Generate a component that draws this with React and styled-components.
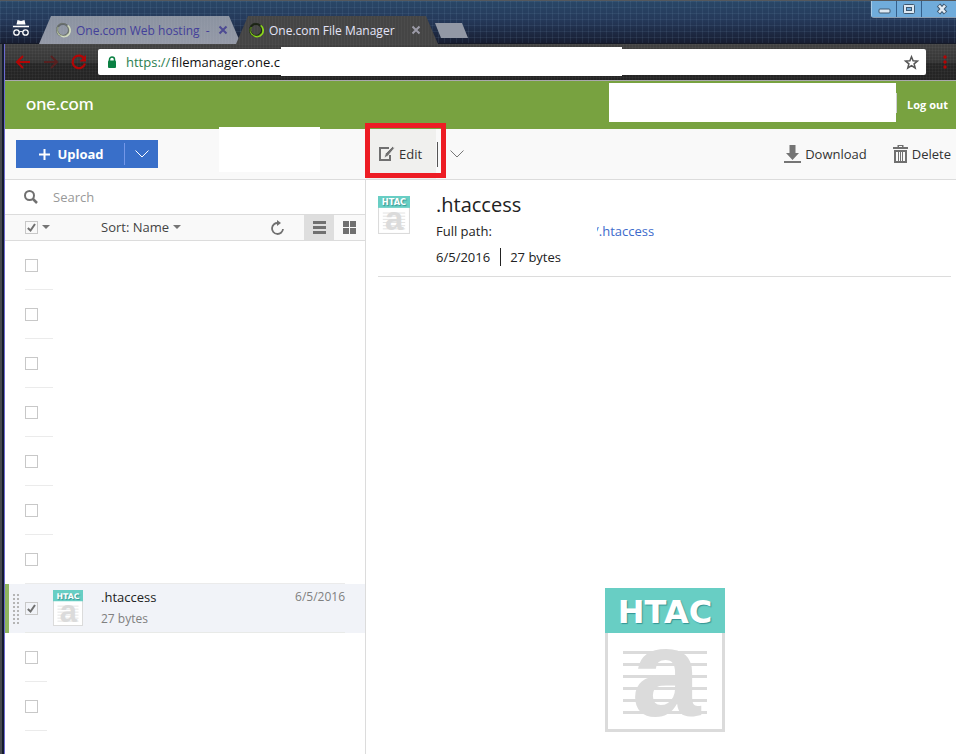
import React from 'react';
import styled, { createGlobalStyle } from 'styled-components';

const GlobalStyle = createGlobalStyle`
  * { box-sizing: border-box; }
  body { margin: 0; background: #fff; color: #222; font-family: "Open Sans", "Noto Sans", sans-serif; font-size: 13px; }
  button { margin: 0; padding: 0; border: 0; background: none; color: inherit; font: inherit; cursor: pointer; }
  input { margin: 0; font: inherit; }
  svg { display: block; flex: none; overflow: visible; }
`;

/* ---------- window and browser chrome ---------- */

const Window = styled.div`
  display: flex;
  flex-direction: column;
  min-height: 100vh;
  overflow: hidden;
  background: linear-gradient(90deg, #474a4f 0 2px, #141c2e 2px 4px, #6c69cf 4px 5px, #fff 5px);
`;

const TitleBar = styled.header`
  display: flex;
  align-items: flex-start;
  height: 44px;
  padding-left: 2px;
  border-top: 1px solid #55585c;
  background:
    repeating-linear-gradient(90deg, rgba(140, 175, 205, 0.1) 0 1px, transparent 1px 6px),
    repeating-linear-gradient(180deg, rgba(140, 175, 205, 0.1) 0 1px, transparent 1px 6px),
    linear-gradient(180deg, #294767 0, #25395a 45%, #171d31 100%);
  border-bottom: 1px solid #151a28;
`;

const Incognito = styled.div`
  display: grid;
  width: 37px;
  height: 43px;
  padding-top: 10px;
  place-content: center;
`;

const Tab = styled.div`
  position: relative;
  z-index: ${(p) => (p.$active ? 2 : 1)};
  display: flex;
  align-items: center;
  width: 202px;
  height: 28px;
  margin-top: 15px;
  margin-right: -5px;
  padding: 0 ${(p) => (p.$active ? 18 : 14)}px 0 ${(p) => (p.$active ? 12 : 16)}px;
  gap: 5px;
  font-size: 12px;
  color: ${(p) => (p.$active ? '#e4e4f8' : '#43409a')};
  background:
    repeating-linear-gradient(90deg, rgba(255, 255, 255, 0.03) 0 1px, transparent 1px 3px),
    ${(p) => (p.$active ? '#454545' : 'linear-gradient(#8b93a1, #9499a7)')};
  clip-path: polygon(12px 0, calc(100% - 12px) 0, 100% 100%, 0 100%);
`;

const TabTitle = styled.span`
  flex: 1;
  overflow: hidden;
  white-space: nowrap;
`;

const NewTab = styled.button`
  width: 33px;
  height: 15px;
  margin-top: 22px;
  margin-left: 2px;
  background: #9298a5;
  clip-path: polygon(0 0, 27px 0, 100% 100%, 6px 100%);
`;

const WindowControls = styled.div`
  display: flex;
  gap: 1px;
  margin-left: auto;
  height: 17px;
  background: #35608b;
  border-left: 1px solid #a8cbe6;
  border-bottom: 1px solid #8d9db0;
  border-bottom-left-radius: 3px;
`;

const WindowButton = styled.button`
  display: grid;
  place-content: center;
  width: ${(p) => (p.$wide ? 34 : 24)}px;
  padding-left: ${(p) => (p.$wide ? 5 : 0)}px;
  background: #70acdb;
`;

const NavBar = styled.div`
  display: flex;
  align-items: center;
  height: 37px;
  margin-left: 5px;
  padding: 0 0 0 4px;
  border-bottom: 1px solid #aaa8ad;
  background:
    repeating-linear-gradient(90deg, rgba(255, 255, 255, 0.03) 0 1px, transparent 1px 3px),
    repeating-linear-gradient(180deg, rgba(255, 255, 255, 0.03) 0 1px, transparent 1px 3px),
    linear-gradient(#424242 0, #363636 50%, #262626 55%, #242424 100%);
`;

const NavButton = styled.button`
  display: grid;
  place-content: center;
  width: 28px;
  height: 28px;
`;

const MenuButton = styled(NavButton)`
  width: 30px;
  padding-left: 8px;
`;

const AddressBar = styled.label`
  position: relative;
  display: flex;
  flex: 1;
  align-items: center;
  height: 26px;
  margin-left: 5px;
  padding: 0 7px 0 9px;
  border-radius: 2px;
  background: #fff;
`;

const Scheme = styled.span`
  margin-left: 9px;
  color: #2b8050;
`;

const AddressInput = styled.input`
  flex: 1;
  min-width: 0;
  padding: 0 0 0 1px;
  border: 0;
  outline: 0;
  background: transparent;
  color: #111;
`;

const AddressCover = styled.span`
  position: absolute;
  top: -2px;
  left: 183px;
  width: 341px;
  height: 29px;
  background: #fff;
`;

const StarButton = styled.button`
  display: grid;
  place-content: center;
`;

/* ---------- site header and toolbar ---------- */

const Page = styled.div`
  display: flex;
  flex: 1;
  flex-direction: column;
  margin-left: 5px;
`;

const SiteHeader = styled.div`
  display: flex;
  align-items: center;
  justify-content: space-between;
  height: 48px;
  padding: 0 8px 0 21px;
  background: #78a240;
  color: #fff;
`;

const Brand = styled.a`
  padding-bottom: 4px;
  color: #fff;
  font-family: Lato, "Open Sans", sans-serif;
  font-size: 18px;
  font-weight: 500;
  line-height: 24px;
  text-decoration: none;
`;

const Account = styled.div`
  display: flex;
  align-items: center;
  gap: 10px;
`;

const AccountBlank = styled.div`
  width: 288px;
  height: 39px;
  margin-bottom: 5px;
  background: linear-gradient(#cfcfd4, #cfcfd4) right center / 1px 20px no-repeat,
    linear-gradient(90deg, #fff 287px, transparent 287px);
`;

const LogOut = styled.a`
  padding-bottom: 1px;
  color: #fff;
  font-size: 11px;
  font-weight: 700;
  text-decoration: none;
`;

const ActionBar = styled.div`
  display: grid;
  grid-template-columns: 361px 1fr;
  height: 51px;
  border-bottom: 1px solid #dcdcdc;
  background: #f9f9f9;
`;

const UploadArea = styled.div`
  position: relative;
  display: flex;
  align-items: center;
  padding-left: 11px;
`;

const UploadGroup = styled.div`
  display: flex;
  align-items: center;
  height: 28px;
  background: #396fc9;
  color: #fff;
`;

const UploadButton = styled.button`
  display: flex;
  align-items: center;
  justify-content: center;
  gap: 7px;
  width: 109px;
  height: 22px;
  padding-left: 3px;
  border-right: 1px solid #7397e8;
  font-size: 13px;
  font-weight: 700;
`;

const UploadMenu = styled.button`
  display: grid;
  place-content: center;
  width: 33px;
  height: 28px;
`;

const ToolbarCover = styled.div`
  position: absolute;
  top: -2px;
  left: 214px;
  width: 101px;
  height: 45px;
  background: #fff;
`;

const FileActions = styled.div`
  position: relative;
  display: flex;
  align-items: center;
  padding-right: 5px;
`;

const ActionButton = styled.button`
  display: flex;
  align-items: center;
  gap: 4px;
  height: 50px;
  color: #333;
`;

const EditButton = styled(ActionButton)`
  width: 70px;
  padding-left: 12px;
  background: #f0f0ee;
`;

const EditMenu = styled.button`
  display: flex;
  align-items: center;
  height: 25px;
  margin-left: 1px;
  padding-left: 12px;
  border-left: 1px solid #555;
`;

const RightActions = styled.div`
  display: flex;
  gap: 26px;
  margin-left: auto;
`;

const Highlight = styled.div`
  position: absolute;
  top: -6px;
  left: -1px;
  width: 81px;
  height: 55px;
  border: 5px solid #ed1c24;
  pointer-events: none;
`;

/* ---------- file list ---------- */

const Content = styled.div`
  display: grid;
  grid-template-columns: 361px 1fr;
  flex: 1;
`;

const ListPane = styled.section`
  border-right: 1px solid #dcdcdc;
`;

const SearchBox = styled.label`
  display: flex;
  align-items: center;
  gap: 15px;
  height: 35px;
  padding-left: 19px;
  border-bottom: 1px solid #dcdcdc;
`;

const SearchInput = styled.input`
  flex: 1;
  min-width: 0;
  padding: 0;
  border: 0;
  outline: 0;
  &::placeholder { color: #999; opacity: 1; }
`;

const SortBar = styled.div`
  display: flex;
  align-items: center;
  height: 26px;
  padding: 0 1px 1px 20px;
  border-bottom: 1px solid #dcdcdc;
  background: #f9f9f9;
`;

const MenuArrow = styled.button`
  display: grid;
  place-content: center;
  width: 16px;
  height: 20px;
`;

const SortButton = styled.button`
  display: flex;
  align-items: center;
  gap: 4px;
  margin-left: 47px;
  padding-bottom: 1px;
  color: #444;
`;

const Refresh = styled.button`
  margin-left: auto;
  margin-right: 20px;
`;

const ViewButton = styled.button`
  display: grid;
  place-content: center;
  align-self: flex-start;
  width: 30px;
  height: 25px;
  background: ${(p) => (p.$active ? '#dedede' : 'transparent')};
`;

const FileList = styled.ul`
  margin: 0;
  padding: 0;
  list-style: none;
`;

const FileRow = styled.li`
  display: flex;
  align-items: center;
  height: 49px;
  padding-left: 20px;
  background: linear-gradient(#ebebeb, #ebebeb) 20px 100% / ${(p) => p.$line}px 1px no-repeat;
`;

const SelectedRow = styled.li`
  display: flex;
  align-items: center;
  height: 49px;
  padding: 0 20px 0 4px;
  border-left: 4px solid #8fb560;
  background: linear-gradient(#e8eae8, #e8eae8) 16px 100% / 320px 1px no-repeat #f1f3f8;
`;

const DragHandle = styled.span`
  width: 6px;
  height: 30px;
  margin-right: 6px;
  background:
    repeating-linear-gradient(180deg, transparent 0 2px, #f1f3f8 2px 4px),
    repeating-linear-gradient(90deg, #b5b5b5 0 2px, transparent 2px 4px);
`;

const CheckBox = styled.span`
  display: grid;
  width: 13px;
  height: 13px;
  flex: none;
  & > * { grid-area: 1 / 1; }
  & > svg { pointer-events: none; z-index: 1; }
`;

const CheckInput = styled.input`
  appearance: none;
  width: 13px;
  height: 13px;
  border: 1px solid #c8c8c8;
  background: ${(p) => (p.checked ? 'transparent' : '#fff')};
`;

const RowIcon = styled.span`
  margin: 0 18px 2px 15px;
`;

const RowText = styled.div`
  display: grid;
  flex: 1;
  grid-template-columns: 1fr auto;
  row-gap: 2px;
  align-self: flex-start;
  padding-top: 3px;
  line-height: 20px;
`;

const FileName = styled.span`
  color: #222;
`;

const Muted = styled.span`
  color: #808080;
  font-size: 12px;
`;

/* ---------- details ---------- */

const DetailPane = styled.section`
  padding: 12px 5px 22px 12px;
`;

const Summary = styled.div`
  display: flex;
  align-items: flex-start;
  gap: 26px;
  padding-top: 4px;
  height: 85px;
  border-bottom: 1px solid #dcdcdc;
`;

const SummaryText = styled.div`
  flex: 1;
  line-height: 26px;
`;

const Title = styled.h1`
  margin: -4px 0 0;
  font-size: 20px;
  font-weight: 400;
  line-height: 26px;
`;

const PathLine = styled.div`
  display: flex;
`;

const PathLabel = styled.span`
  width: 158px;
`;

const PathLink = styled.a`
  color: #3d6bcc;
  text-decoration: none;
  clip-path: polygon(3px 0, 100% 0, 100% 100%, 5px 100%, 5px 60%, 3px 50%);
`;

const MetaLine = styled.div`
  display: flex;
  align-items: center;
`;

const Size = styled.span`
  margin-left: 10px;
  padding-left: 9px;
  border-left: 1px solid #222;
  line-height: 18px;
`;

const Preview = styled.div`
  display: flex;
  justify-content: center;
  padding-top: 311px;
`;

/* ---------- drawings ---------- */

const FileLabel = styled.text`
  font-family: "DejaVu Sans", sans-serif;
  font-weight: 700;
  fill: #fff;
  text-shadow: 1px 1px 1px rgba(20, 110, 115, 0.6);
`;

function FileIcon({ width, height, border, label }) {
  return (
    <svg width={width} height={height} viewBox="0 0 120 144" preserveAspectRatio="none" role="img" aria-label="HTAC file">
      <rect x={border / 2} y="20" width={120 - border} height={144 - border / 2 - 20} fill="#fff" stroke="#dbdbdb" strokeWidth={border} />
      <path d="M18 64.500H102M18 76.500H102M18 88.500H102M18 100.500H102M18 112.500H102M18 124.500H102" stroke="#dbdbdb" strokeWidth="3" />
      <text x="61" y="128" textAnchor="middle" fontFamily="Liberation Sans, Arial, sans-serif" fontWeight="700" fontSize="124" fill="#dbdbdb">a</text>
      <rect width="120" height="45" fill="#68cec4" />
      <FileLabel x="60" y="35" textAnchor="middle" fontSize={label}>HTAC</FileLabel>
    </svg>
  );
}

const TabLogo = ({ bright }) => (
  <svg width="16" height="16" viewBox="0 0 16 16" fill="none">
    <circle cx="8" cy="8" r="6" stroke={bright ? '#1c2413' : '#62686c'} strokeWidth="2" />
    <path d="M12.500 3.500a6 6 0 0 1-7 9.800" stroke={bright ? '#8fdc1c' : '#d5dfc4'} strokeWidth="2" />
    <path d="M3 5a6 6 0 0 0 3 8.500" stroke={bright ? '#7cc41c' : '#b7c39f'} strokeWidth="1.500" />
    <ellipse cx="8" cy="7.500" rx="5.500" ry="6.500" transform="rotate(-35 8 7.500)" stroke={bright ? '#20281c' : '#70776d'} strokeWidth=".7" />
  </svg>
);

const Close = ({ color }) => (
  <svg width="8" height="8" viewBox="0 0 8 8" stroke={color} strokeWidth="2"><path d="M.5.5l7 7M7.500.5l-7 7" /></svg>
);

const Chevron = ({ color }) => (
  <svg width="14" height="8" viewBox="0 0 14 8" fill="none" stroke={color}><path d="M.5.5L7 7 13.500.5" /></svg>
);

const Caret = () => <svg width="8" height="4" viewBox="0 0 8 4" fill="#757575"><path d="M0 0h8L4 4z" /></svg>;

function Check({ label, checked = false }) {
  return (
    <CheckBox>
      <CheckInput type="checkbox" checked={checked} readOnly aria-label={label} />
      {checked && (
        <svg width="13" height="13" viewBox="0 0 13 13" fill="none" stroke="#707070" strokeWidth="2"><path d="M2.800 7l2.700 2.500 4.500-6.500" /></svg>
      )}
    </CheckBox>
  );
}

const rowsBefore = [28, 28, 28, 28, 28, 28, 320];
const rowsAfter = [22, 22];

export default function App() {
  return (
    <Window>
      <GlobalStyle />
      <TitleBar>
        <Incognito>
          <svg width="18" height="18" viewBox="0 0 18 18" fill="none" stroke="#fff">
            <path d="M5.500 1l3.500 1 3.500-1 1 4.500h-9z" fill="#fff" stroke="none" />
            <path d="M1 7.500h16" strokeWidth="1.500" />
            <circle cx="4.500" cy="13.500" r="2.700" strokeWidth="1.300" /><circle cx="13.500" cy="13.500" r="2.700" strokeWidth="1.300" />
            <path d="M7 13q2-1 4 0" />
          </svg>
        </Incognito>
        <Tab>
          <TabLogo />
          <TabTitle>One.com Web hosting&nbsp; -</TabTitle>
          <button aria-label="Close tab"><Close color="#4d4a93" /></button>
        </Tab>
        <Tab $active>
          <TabLogo bright />
          <TabTitle>One.com File Manager</TabTitle>
          <button aria-label="Close tab"><Close color="#9c9ba8" /></button>
        </Tab>
        <NewTab aria-label="New tab" />
        <WindowControls>
          <WindowButton aria-label="Minimize">
            <svg width="13" height="10" viewBox="0 0 13 10"><rect x="1" y="5" width="11" height="4" rx="1" fill="#dce8f2" stroke="#3e5870" /></svg>
          </WindowButton>
          <WindowButton aria-label="Maximize">
            <svg width="12" height="10" viewBox="0 0 12 10"><rect x=".5" y=".5" width="11" height="9" rx="1" fill="#dce8f2" stroke="#3e5870" /><rect x="3.500" y="3.500" width="5" height="3" fill="#70acdb" stroke="#3e5870" /></svg>
          </WindowButton>
          <WindowButton $wide aria-label="Close window">
            <svg width="12" height="10" viewBox="0 0 12 10" fill="none"><path d="M2.500 1l7 8M9.500 1l-7 8" stroke="#3e5870" strokeWidth="4.500" /><path d="M3 1.500l6 7M9 1.500l-6 7" stroke="#e4edf5" strokeWidth="2.500" /></svg>
          </WindowButton>
        </WindowControls>
      </TitleBar>

      <NavBar>
        <NavButton aria-label="Back">
          <svg width="16" height="14" viewBox="0 0 16 14" fill="none" stroke="#b30505" strokeWidth="2"><path d="M15 7H2M8 1L2 7l6 6" /></svg>
        </NavButton>
        <NavButton aria-label="Forward">
          <svg width="16" height="14" viewBox="0 0 16 14" fill="none" stroke="#572020" strokeWidth="2"><path d="M1 7h13M8 1l6 6-6 6" /></svg>
        </NavButton>
        <NavButton aria-label="Reload">
          <svg width="16" height="16" viewBox="0 0 16 16" fill="none" stroke="#b30505" strokeWidth="2.200"><path d="M13.500 5A6.300 6.300 0 1 0 14 9.500" /><path d="M15 1v6.500H8.500z" fill="#b30505" stroke="none" /></svg>
        </NavButton>
        <AddressBar>
          <svg width="10" height="12" viewBox="0 0 10 12"><rect x="1" y="4.500" width="8" height="7.500" rx="1" fill="#0b8043" /><path d="M2.500 5V3.500a2.500 2.500 0 0 1 5 0V5" fill="none" stroke="#0b8043" strokeWidth="1.500" /></svg>
          <Scheme>https://</Scheme>
          <AddressInput aria-label="Address" defaultValue="filemanager.one.c" />
          <AddressCover />
          <StarButton aria-label="Bookmark">
            <svg width="15" height="15" viewBox="0 0 15 15" fill="none" stroke="#555" strokeWidth="1.500"><path d="M7.500 1.800l1.600 4 4.300.3-3.300 2.700 1.100 4.200-3.700-2.300L3.800 13l1.100-4.200L1.600 6.100l4.300-.3z" /></svg>
          </StarButton>
        </AddressBar>
        <MenuButton aria-label="Browser menu">
          <svg width="4" height="14" viewBox="0 0 4 14" fill="#b30505"><circle cx="2" cy="2" r="1.700" /><circle cx="2" cy="7" r="1.700" /><circle cx="2" cy="12" r="1.700" /></svg>
        </MenuButton>
      </NavBar>

      <Page>
        <SiteHeader>
          <Brand href="#home">one.com</Brand>
          <Account>
            <AccountBlank />
            <LogOut href="#logout">Log out</LogOut>
          </Account>
        </SiteHeader>

        <ActionBar>
          <UploadArea>
            <UploadGroup>
              <UploadButton>
                <svg width="11" height="11" viewBox="0 0 11 11" stroke="#fff" strokeWidth="2"><path d="M5.500 0v11M0 5.500h11" /></svg>
                Upload
              </UploadButton>
              <UploadMenu aria-label="Upload options"><Chevron color="#fff" /></UploadMenu>
            </UploadGroup>
            <ToolbarCover />
          </UploadArea>
          <FileActions>
            <EditButton>
              <svg width="17" height="16" viewBox="0 0 17 16" fill="none" stroke="#707070"><path d="M11 2H2v12h10V9" strokeWidth="2" /><path d="M6 12l1.500-4.500L14.500.5l2 1.500L10 10z" fill="#707070" stroke="#f0f0ee" strokeWidth=".8" /></svg>
              Edit
            </EditButton>
            <EditMenu aria-label="Edit options"><Chevron color="#777" /></EditMenu>
            <Highlight />
            <RightActions>
              <ActionButton>
                <svg width="17" height="18" viewBox="0 0 17 18" fill="#757575"><path d="M5.500 0h6v8h3.500l-6.500 7L2 8h3.500zM0 16h17v2H0z" /></svg>
                Download
              </ActionButton>
              <ActionButton>
                <svg width="15" height="18" viewBox="0 0 15 18" fill="#707070"><path d="M0 2h4.500V0h6v2H15v2H0zM6 1v1h3V1zM1 5h13v13H1zM3 7v9h2V7zM6 7v9h1V7zM8 7v9h1V7zM10 7v9h2V7z" fillRule="evenodd" /></svg>
                Delete
              </ActionButton>
            </RightActions>
          </FileActions>
        </ActionBar>

        <Content>
          <ListPane>
            <SearchBox>
              <svg width="14" height="14" viewBox="0 0 14 14" fill="none" stroke="#707070"><circle cx="5.500" cy="5.500" r="4.500" strokeWidth="2" /><path d="M9 9l4 4" strokeWidth="2.500" /></svg>
              <SearchInput type="text" placeholder="Search" aria-label="Search" />
            </SearchBox>
            <SortBar>
              <Check label="Select all" checked />
              <MenuArrow aria-label="Selection options"><Caret /></MenuArrow>
              <SortButton>Sort: Name <Caret /></SortButton>
              <Refresh aria-label="Refresh">
                <svg width="14" height="15" viewBox="0 0 14 15" fill="none" stroke="#707070" strokeWidth="1.800"><path d="M8 3a5.500 5.500 0 1 0 5 6" /><path d="M7 0l4 3-4 3z" fill="#707070" stroke="none" /></svg>
              </Refresh>
              <ViewButton $active aria-label="List view">
                <svg width="13" height="13" viewBox="0 0 13 13" fill="#707070"><path d="M0 0h13v3H0zM0 5h13v3H0zM0 10h13v3H0z" /></svg>
              </ViewButton>
              <ViewButton aria-label="Grid view">
                <svg width="13" height="13" viewBox="0 0 13 13" fill="#707070"><path d="M0 0h6v6H0zM7 0h6v6H7zM0 7h6v6H0zM7 7h6v6H7z" /></svg>
              </ViewButton>
            </SortBar>
            <FileList>
              {rowsBefore.map((line, i) => (
                <FileRow key={i} $line={line}><Check label={`Select file ${i + 1}`} /></FileRow>
              ))}
              <SelectedRow>
                <DragHandle />
                <Check label="Select .htaccess" checked />
                <RowIcon><FileIcon width={30} height={36} border={4} label={31} /></RowIcon>
                <RowText>
                  <FileName>.htaccess</FileName>
                  <Muted>6/5/2016</Muted>
                  <Muted>27 bytes</Muted>
                </RowText>
              </SelectedRow>
              {rowsAfter.map((line, i) => (
                <FileRow key={i} $line={line}><Check label={`Select file ${i + 9}`} /></FileRow>
              ))}
            </FileList>
          </ListPane>

          <DetailPane>
            <Summary>
              <FileIcon width={32} height={38} border={4} label={31} />
              <SummaryText>
                <Title>.htaccess</Title>
                <PathLine>
                  <PathLabel>Full path:</PathLabel>
                  <PathLink href="#file">/.htaccess</PathLink>
                </PathLine>
                <MetaLine>
                  <span>6/5/2016</span>
                  <Size>27 bytes</Size>
                </MetaLine>
              </SummaryText>
            </Summary>
            <Preview>
              <FileIcon width={120} height={144} border={3} label={32} />
            </Preview>
          </DetailPane>
        </Content>
      </Page>
    </Window>
  );
}
